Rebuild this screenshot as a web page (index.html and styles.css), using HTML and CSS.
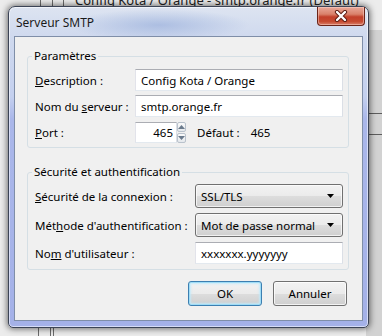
FILE: index.html
```html
<!DOCTYPE html>
<html lang="fr">
<head>
<meta charset="UTF-8">
<title>Serveur SMTP</title>
<link rel="stylesheet" href="styles.css">
</head>
<body>
<div class="desktop">
    <div class="back-title">Config Kota / Orange - smtp.orange.fr (Défaut)</div>
    <div class="back-line top-a"></div>
    <div class="back-line top-b"></div>
    <div class="back-line top-c"></div>
    <div class="back-line bot-a"></div>
    <div class="back-line bot-b"></div>
    <div class="back-line bot-c"></div>
    <div class="back-right">
        <div class="back-rule rule-a"></div>
        <div class="back-rule rule-b"></div>
    </div>

    <div class="dialog">
        <div class="titlebar">
            <span class="title">Serveur SMTP</span>
            <div class="close">
                <svg width="14" height="12" viewBox="0 0 14 12">
                    <path d="M3 2 L11 10 M11 2 L3 10" stroke="#5a1a10" stroke-width="4.2" stroke-linecap="round"/>
                    <path d="M3 2 L11 10 M11 2 L3 10" stroke="#fff" stroke-width="2.4" stroke-linecap="round"/>
                </svg>
            </div>
        </div>

        <div class="client">
            <fieldset class="group">
                <legend>Paramètres</legend>
                <div class="row first">
                    <label class="label narrow"><u>D</u>escription :</label>
                    <input class="field wide" type="text" value="Config Kota / Orange">
                </div>
                <div class="row">
                    <label class="label narrow">Nom du <u>s</u>erveur :</label>
                    <input class="field wide" type="text" value="smtp.orange.fr">
                </div>
                <div class="row">
                    <label class="label narrow"><u>P</u>ort :</label>
                    <div class="spin">
                        <input class="field port" type="text" value="465">
                        <div class="spin-buttons">
                            <div class="spin-btn up">
                                <svg width="7" height="4" viewBox="0 0 7 4"><path d="M0 4 L3.5 0 L7 4 Z" fill="#6a7a8c"/></svg>
                            </div>
                            <div class="spin-btn down">
                                <svg width="7" height="4" viewBox="0 0 7 4"><path d="M0 0 L3.5 4 L7 0 Z" fill="#6a7a8c"/></svg>
                            </div>
                        </div>
                    </div>
                    <span class="default-label">Défaut :</span>
                    <span class="default-value">465</span>
                </div>
            </fieldset>

            <fieldset class="group second">
                <legend>Sécurité et authentification</legend>
                <div class="row first tall">
                    <label class="label broad"><u>S</u>écurité de la connexion :</label>
                    <div class="select">
                        <span>SSL/TLS</span>
                        <svg width="7" height="4" viewBox="0 0 7 4"><path d="M0 0 L7 0 L3.5 4 Z" fill="#000"/></svg>
                    </div>
                </div>
                <div class="row tall">
                    <label class="label broad">Mét<u>h</u>ode d'authentification :</label>
                    <div class="select">
                        <span>Mot de passe normal</span>
                        <svg width="7" height="4" viewBox="0 0 7 4"><path d="M0 0 L7 0 L3.5 4 Z" fill="#000"/></svg>
                    </div>
                </div>
                <div class="row">
                    <label class="label broad">No<u>m</u> d'utilisateur :</label>
                    <input class="field wide" type="text" value="xxxxxxx.yyyyyyy">
                </div>
            </fieldset>

            <div class="actions">
                <button class="btn default">OK</button>
                <button class="btn">Annuler</button>
            </div>
        </div>
    </div>
</div>
</body>
</html>
```

FILE: styles.css
```css
* {
    box-sizing: border-box;
}
body {
    margin: 0;
    width: 382px;
    height: 336px;
    overflow: hidden;
    font-family: "Noto Sans", "Open Sans", sans-serif;
    font-size: 11.5px;
    color: #000;
}
.desktop {
    position: relative;
    width: 382px;
    height: 336px;
    background: #ececec;
}

/* window behind the dialog */
.back-title {
    position: absolute;
    left: 75px;
    top: -9px;
    font-size: 13px;
    color: #222;
    white-space: nowrap;
}
.back-line {
    position: absolute;
    width: 1px;
    height: 10px;
    background: #6b6b6b;
}
.top-a { left: 40px; top: 0; }
.top-b { left: 52px; top: 0; }
.top-c { left: 63px; top: 0; }
.bot-a { left: 38px; top: 326px; }
.bot-b { left: 50px; top: 326px; }
.bot-c { left: 53px; top: 326px; }
.back-right {
    position: absolute;
    left: 366px;
    top: 30px;
    width: 16px;
    height: 306px;
    background: #d2d2d2;
}
.back-rule {
    height: 1px;
    background: #5d5d5d;
}
.rule-a { margin-top: 83px; }
.rule-b { margin-top: 20px; }

/* dialog frame */
.dialog {
    position: absolute;
    left: 8px;
    top: 6px;
    width: 361px;
    height: 322px;
    display: flex;
    flex-direction: column;
    padding: 0 5px 6px 5px;
    border: 1px solid #3c4456;
    border-radius: 7px 7px 5px 5px;
    background:
        radial-gradient(ellipse 90px 16px at 150px 18px, rgba(140, 165, 215, 0.55), rgba(140, 165, 215, 0)),
        linear-gradient(to bottom, #dde4f1 0, #cfd9ee 30px, #c4d0ef 90px, #aab7ea 112px, #a4b1e8 100%);
    box-shadow: 0 0 6px 1px rgba(0, 0, 0, 0.55), inset 0 0 0 1px rgba(255, 255, 255, 0.55);
}
.titlebar {
    height: 29px;
    display: flex;
    justify-content: space-between;
    align-items: flex-start;
}
.title {
    margin: 8px 0 0 2px;
    line-height: 16px;
    font-size: 12px;
    color: #1a1a1a;
}
.close {
    width: 48px;
    height: 19px;
    margin-right: -2px;
    display: flex;
    align-items: center;
    justify-content: center;
    border: 1px solid #6b2418;
    border-top: none;
    border-radius: 0 0 4px 4px;
    background: linear-gradient(to bottom, #e9a99a 0, #d9816a 40%, #c2402a 55%, #c64a30 80%, #d9806a 100%);
    box-shadow: inset 0 0 0 1px rgba(255, 220, 210, 0.45);
}

/* client area */
.client {
    flex: 1;
    padding: 11px 13px 0 12px;
    background: #f0f0f0;
    border: 1px solid #7f8ea8;
}
.group {
    margin: 0;
    min-width: 0;
    padding: 0 5px 4px 7px;
    border: 1px solid #d5dfe5;
    border-radius: 3px;
}
.group.second {
    margin-top: 16px;
    padding-bottom: 5px;
}
.group legend {
    margin-left: -3px;
    padding: 0 2px;
    line-height: 16px;
    color: #000;
}
.row {
    display: flex;
    align-items: center;
    height: 22px;
    margin-top: 4px;
}
.row.first {
    margin-top: 5px;
}
.row.tall {
    height: 24px;
}
.group.second .row {
    margin-top: 5px;
}
.group.second .row.first {
    margin-top: 4px;
}
.label {
    flex: none;
    white-space: nowrap;
}
.label.narrow {
    width: 100px;
}
.label.broad {
    width: 160px;
}
.field {
    height: 22px;
    padding: 0 5px;
    font: inherit;
    color: #000;
    background: #fff;
    border: 1px solid;
    border-color: #abadb3 #dbdfe6 #e3e9ef #e2e3ea;
    outline: none;
}
.field.wide {
    flex: 1;
    min-width: 0;
}
.spin {
    display: flex;
    align-items: center;
}
.field.port {
    width: 42px;
    height: 21px;
    padding-right: 3px;
    text-align: right;
}
.spin-buttons {
    display: flex;
    flex-direction: column;
    gap: 1px;
}
.spin-btn {
    width: 9px;
    height: 10px;
    display: flex;
    align-items: center;
    justify-content: center;
    border: 1px solid #b9c2cc;
    border-radius: 2px;
    background: linear-gradient(to bottom, #fafafa, #e4e8ec);
}
.default-label {
    margin-left: 11px;
}
.default-value {
    margin-left: 11px;
}
.select {
    flex: 1;
    min-width: 0;
    height: 24px;
    display: flex;
    align-items: center;
    justify-content: space-between;
    padding: 0 5px 0 5px;
    border: 1px solid #707070;
    border-radius: 3px;
    background: linear-gradient(to bottom, #f2f2f2 0, #ebebeb 50%, #dddddd 51%, #cfcfcf 100%);
    box-shadow: inset 0 0 0 1px rgba(255, 255, 255, 0.7);
}
.select svg {
    margin-right: 3px;
}

/* buttons */
.actions {
    display: flex;
    justify-content: flex-end;
    gap: 11px;
    margin: 11px 2px 0 0;
}
.btn {
    width: 74px;
    height: 25px;
    padding: 0;
    font: inherit;
    color: #000;
    border: 1px solid #707070;
    border-radius: 3px;
    background: linear-gradient(to bottom, #f2f2f2 0, #ebebeb 50%, #dddddd 51%, #cfcfcf 100%);
    box-shadow: inset 0 0 0 1px rgba(255, 255, 255, 0.75);
}
.btn.default {
    border-color: #3c7fb1;
    box-shadow: inset 0 0 0 1px #9fdcf6, inset 0 0 2px 2px rgba(190, 235, 252, 0.8);
}
```
